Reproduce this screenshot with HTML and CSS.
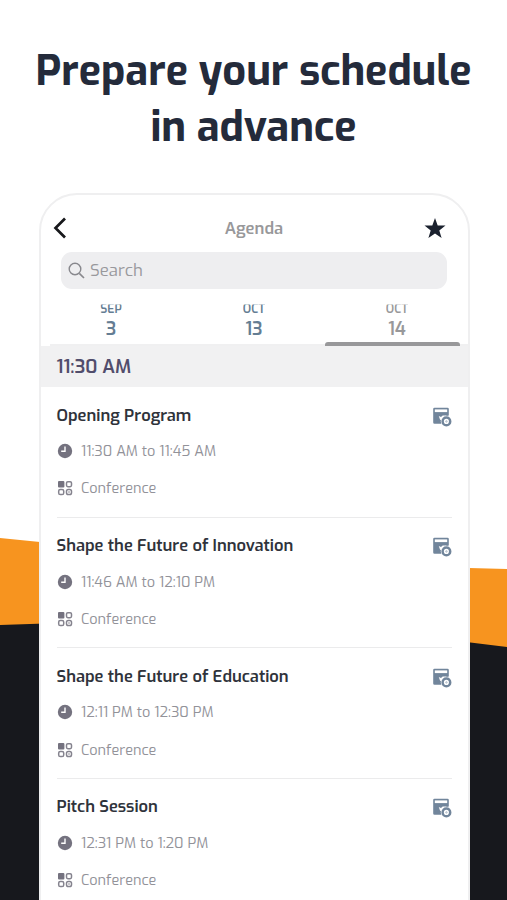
FILE: index.html
```
<!DOCTYPE html>
<html lang="en">
<head>
<meta charset="utf-8">
<title>Agenda</title>
<link rel="stylesheet" href="styles.css">
</head>
<body>
<svg class="defs" width="0" height="0" aria-hidden="true">
  <symbol id="clock" viewBox="0 0 16 16"><circle cx="8" cy="8" r="7.2" fill="#74727f"/><path d="M8 3.400V8.300H4.200" fill="none" stroke="#fff" stroke-width="1.400"/></symbol>
  <symbol id="grid" viewBox="0 0 16 16"><rect x="1" y="1" width="6.4" height="6.4" rx="1" fill="#74727f"/><g fill="none" stroke="#85838e" stroke-width="1.500"><rect x="9.500" y="1.700" width="5" height="5" rx="1.400"/><rect x="1.700" y="9.500" width="5" height="5" rx="1.600"/><rect x="9.500" y="9.500" width="5" height="5" rx="1.800"/></g><circle cx="12" cy="12" r=".8" fill="#85838e"/></symbol>
  <symbol id="add" viewBox="0 0 20 20"><path d="M2.500 .8h13q1.300 0 1.300 1.300v6.500l-4 1-2.500 3v4.200H2.500q-1.300 0-1.300-1.300V2.100q0-1.300 1.300-1.300z" fill="#71859b"/><path d="M2.800 2.400h12.400v2.700H2.800z" fill="#fff"/><path d="M6.800 9l2.200.9 1.700-1.400h4l-3.200 2-1.800 3.500-1.700-1.600z" fill="#fff"/><circle cx="14.400" cy="14.400" r="5.600" fill="#fff"/><circle cx="14.400" cy="14.400" r="3.800" fill="#fff" stroke="#71859b" stroke-width="2.500"/><path d="M14.400 13v2.800M13 14.400h2.800" stroke="#c3ccd5" stroke-width="1"/></symbol>
</svg>
<main class="poster">
  <svg class="backdrop" viewBox="0 0 507 900" aria-hidden="true">
    <path d="M0 538L60 544V640H0z" fill="#f7941f"/>
    <path d="M0 625L60 623V900H0z" fill="#17181d"/>
    <path d="M450 567.500L507 569V660H450z" fill="#f7941f"/>
    <path d="M450 640L507 647V900H450z" fill="#17181d"/>
  </svg>
  <h1 class="headline">Prepare your schedule<br>in advance</h1>
  <section class="phone">
    <header class="bar">
      <svg class="back" viewBox="0 0 14 22"><path d="M12 1.500L2.500 11L12 20.500" fill="none" stroke="#17181b" stroke-width="2.700"/></svg>
      <span class="bar-title">Agenda</span>
      <svg class="star" viewBox="0 0 22 21"><path d="M11 0l2.700 7.500 7.800.1-6.200 4.800 2.300 7.600L11 15.500 4.400 20l2.300-7.600L.5 7.600l7.800-.1z" fill="#1b212e"/></svg>
    </header>
    <div class="search">
      <svg class="lens" viewBox="0 0 17 17"><circle cx="7" cy="7" r="5.800" fill="none" stroke="#88888d" stroke-width="1.400"/><path d="M11.300 11.300L16 16" stroke="#88888d" stroke-width="1.700"/></svg>
      <span>Search</span>
    </div>
    <nav class="tabs">
      <div class="tab"><span class="month">SEP</span><span class="day">3</span></div>
      <div class="tab"><span class="month">OCT</span><span class="day">13</span></div>
      <div class="tab active"><span class="month">OCT</span><span class="day">14</span></div>
    </nav>
    <div class="slot"><span>11:30 AM</span></div>
    <div class="sessions">
      <article class="session">
        <div class="top"><h2>Opening Program</h2><svg class="add"><use href="#add"/></svg></div>
        <p class="meta"><svg><use href="#clock"/></svg><span>11:30 AM to 11:45 AM</span></p>
        <p class="meta"><svg><use href="#grid"/></svg><span>Conference</span></p>
      </article>
      <article class="session">
        <div class="top"><h2>Shape the Future of Innovation</h2><svg class="add"><use href="#add"/></svg></div>
        <p class="meta"><svg><use href="#clock"/></svg><span>11:46 AM to 12:10 PM</span></p>
        <p class="meta"><svg><use href="#grid"/></svg><span>Conference</span></p>
      </article>
      <article class="session">
        <div class="top"><h2>Shape the Future of Education</h2><svg class="add"><use href="#add"/></svg></div>
        <p class="meta"><svg><use href="#clock"/></svg><span>12:11 PM to 12:30 PM</span></p>
        <p class="meta"><svg><use href="#grid"/></svg><span>Conference</span></p>
      </article>
      <article class="session">
        <div class="top"><h2>Pitch Session</h2><svg class="add"><use href="#add"/></svg></div>
        <p class="meta"><svg><use href="#clock"/></svg><span>12:31 PM to 1:20 PM</span></p>
        <p class="meta"><svg><use href="#grid"/></svg><span>Conference</span></p>
      </article>
    </div>
  </section>
</main>
</body>
</html>
```
FILE: styles.css
```
* { box-sizing: border-box; }
body { margin: 0; background: #fff; font-family: Exo, "Exo 2", Roboto, "Liberation Sans", sans-serif; }
h1, h2, p { margin: 0; }
.defs { position: absolute; }
.poster { position: relative; height: 900px; overflow: hidden; }
.backdrop { position: absolute; inset: 0; width: 507px; height: 900px; }
.headline { position: relative; height: 193px; padding-top: 43px; text-align: center; color: #242b3b; font-size: 41.500px; font-weight: 700; line-height: 56px; white-space: nowrap; }
.phone { position: relative; width: 431px; height: 760px; margin-left: 38.500px; border: 2px solid #efeff0; border-radius: 38px 38px 0 0; background: #fff; overflow: hidden; }
.bar { display: grid; grid-template-columns: 22px 1fr 22px; align-items: center; height: 57px; padding: 10px 22px 0 12px; }
.back { width: 14px; height: 22px; margin-top: -2px; }
.star { width: 22px; height: 21px; }
.bar-title { color: #98989a; font-size: 16.600px; font-weight: 600; text-align: center; padding: 0 0 2px 10px; }
.search { display: flex; align-items: center; gap: 5px; width: 386px; height: 37px; margin-left: 20.500px; padding-left: 7px; border-radius: 11px; background: #eeeef0; color: #98989c; font-size: 16.800px; }
.search span { padding-bottom: 2px; }
.lens { width: 17px; height: 17px; }
.tabs { display: grid; grid-template-columns: repeat(3, 143px); height: 57px; margin-left: -1px; padding-top: 12px; position: relative; }
.tabs::before { content: ""; position: absolute; left: 10px; right: 0; bottom: 0; height: 2px; background: #f0f0f1; }
.tab { position: relative; display: flex; flex-direction: column; align-items: center; color: #647d93; font-weight: 600; }
.month { margin-top: 1px; font-size: 12px; line-height: 15px; clip-path: inset(2.500px 0 0 0); }
.day { font-size: 18px; line-height: 22px; margin-top: 1px; }
.active { color: #98989a; }
.active::after { content: ""; position: absolute; left: -1px; width: 135px; bottom: 0; height: 4.500px; border-radius: 3px 3px 0 0; background: #98989a; }
.slot { display: flex; align-items: center; height: 41px; padding-left: 16px; background: #f1f1f2; color: #514d6c; font-size: 18.700px; font-weight: 600; }
.sessions { padding: 0 15.500px 0 16px; }
.session { height: 130.670px; padding-top: 15.500px; border-bottom: 1.500px solid #ebebec; }
.top { display: flex; align-items: center; justify-content: space-between; height: 24px; }
.top h2 { color: #2f333b; font-size: 16.500px; font-weight: 600; white-space: nowrap; }
.add { width: 20px; height: 20px; margin-top: 4px; }
.meta { display: flex; align-items: center; gap: 8.500px; height: 37.300px; color: #929299; font-size: 14.450px; font-weight: 400; white-space: nowrap; }
.top + .meta { margin-top: 6px; }
.meta span { padding-top: 1px; }
.meta svg { width: 16px; height: 16px; }
```
